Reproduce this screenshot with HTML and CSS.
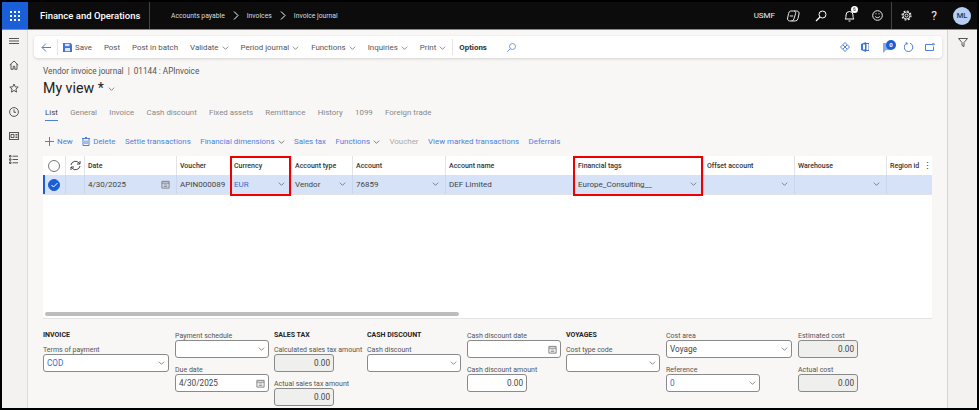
FILE: index.html
```html
<!DOCTYPE html>
<html lang="en">
<head>
    <meta charset="UTF-8">
    <meta name="viewport" content="width=device-width, initial-scale=1.0">
    <title>Invoice journal</title>
    <link rel="stylesheet" href="styles.css">
</head>
<body>
    <svg class="sprites" width="0" height="0">
        <symbol id="chev" viewBox="0 0 10 6"><path d="M1 1l4 4 4-4" fill="none" stroke="currentColor" stroke-width="1"/></symbol>
        <symbol id="cal" viewBox="0 0 10 10"><path d="M1 1.5h8v7.5h-8z" fill="none" stroke="currentColor"/><path d="M1 3.5h8" stroke="currentColor"/><path d="M3 5.5h4M3 7.2h4" stroke="currentColor" stroke-width=".8"/></symbol>
    </svg>

    <div class="app">
        <header class="topbar">
            <div class="waffle">
                <svg width="10" height="10" viewBox="0 0 10 10" fill="#fff"><rect width="2" height="2"/><rect x="4" width="2" height="2"/><rect x="8" width="2" height="2"/><rect y="4" width="2" height="2"/><rect x="4" y="4" width="2" height="2"/><rect x="8" y="4" width="2" height="2"/><rect y="8" width="2" height="2"/><rect x="4" y="8" width="2" height="2"/><rect x="8" y="8" width="2" height="2"/></svg>
            </div>
            <div class="app-name">Finance and Operations</div>
            <nav class="crumbs">
                <span>Accounts payable</span>
                <svg width="6" height="9" viewBox="0 0 6 9"><path d="M1 .5l4 4-4 4" fill="none" stroke="#fff"/></svg>
                <span>Invoices</span>
                <svg width="6" height="9" viewBox="0 0 6 9"><path d="M1 .5l4 4-4 4" fill="none" stroke="#fff"/></svg>
                <span>Invoice journal</span>
            </nav>
            <div class="top-right">
                <span class="company">USMF</span>
                <span class="top-icon">
                    <svg width="13" height="12" viewBox="0 0 13 12" fill="none" stroke="#e8e8e8"><path d="M3.500 1h3.200a2 2 0 0 1 1.900 2.600l-1.700 5.400a3 3 0 0 1-2.900 2h-1.200a2.300 2.300 0 0 1-2.200-3l1-4.500a3 3 0 0 1 1.900-2.500z"/><path d="M7 1h2.800a2.300 2.300 0 0 1 2.200 3l-1 4.500a3 3 0 0 1-2.900 2.500h-3.600"/><path d="M2.800 6h3.400"/></svg>
                </span>
                <span class="top-icon">
                    <svg width="12" height="12" viewBox="0 0 12 12" fill="none" stroke="#fff"><circle cx="7.500" cy="4.500" r="3.500"/><path d="M5 7l-4 4" stroke-width="1.300"/></svg>
                </span>
                <span class="top-icon bell">
                    <svg width="11" height="12" viewBox="0 0 11 12" fill="none" stroke="#fff"><path d="M1 9c1-1 1-2 1-4a3.500 3.500 0 0 1 7 0c0 2 0 3 1 4z"/><path d="M4.500 11h2"/></svg>
                    <span class="bell-badge">6</span>
                </span>
                <span class="top-icon">
                    <svg width="11" height="11" viewBox="0 0 11 11" fill="none" stroke="#eee"><circle cx="5.500" cy="5.500" r="4.800"/><path d="M3.200 6.500c1 1.500 3.600 1.500 4.600 0"/><path d="M3.500 3.800h1M6.500 3.800h1"/></svg>
                </span>
                <span class="top-divider"></span>
                <span class="top-icon">
                    <svg width="11" height="11" viewBox="0 0 11 11" fill="none" stroke="#eee"><circle cx="5.500" cy="5.500" r="1.500"/><circle cx="5.500" cy="5.500" r="3.500"/><circle cx="5.500" cy="5.500" r="4.500" stroke-width="1.200" stroke-dasharray="1.800 1.730"/></svg>
                </span>
                <span class="top-icon help">?</span>
                <span class="avatar">ML</span>
            </div>
        </header>

        <div class="main">
            <aside class="rail">
                <svg width="10" height="6" viewBox="0 0 10 6" stroke="#555"><path d="M0 .5h10M0 3h10M0 5.500h10"/></svg>
                <svg width="10" height="10" viewBox="0 0 10 10" fill="none" stroke="#555"><path d="M.8 5l4.200-4 4.200 4M2 4v5.300h2.200v-3h1.600v3h2.200v-5.300"/></svg>
                <svg width="10" height="10" viewBox="0 0 10 10" fill="none" stroke="#555"><path d="M5 1l1.200 2.800 3 .3-2.300 2 .7 3-2.600-1.600-2.600 1.600.7-3-2.300-2 3-.3z"/></svg>
                <svg width="10" height="10" viewBox="0 0 10 10" fill="none" stroke="#555"><circle cx="5" cy="5" r="4.400"/><path d="M5 2.500v2.800h2"/></svg>
                <svg width="10" height="8" viewBox="0 0 10 8" fill="none" stroke="#555"><rect x=".5" y=".5" width="9" height="7"/><path d="M2 2.500h3v3h-3zM6.500 2.500h2M6.500 4h2M6.500 5.500h2"/></svg>
                <svg width="9" height="9" viewBox="0 0 9 9" fill="none" stroke="#555"><path d="M.5.500h1.500v1.500h-1.500zM.5 3.800h1.500v1.500h-1.500zM.5 7h1.500v1.500h-1.500zM3.500 1.200h5.500M3.500 4.500h5.500M3.500 7.800h5.500"/></svg>
            </aside>

            <main class="content">
                <div class="action-bar">
                    <span class="back">
                        <svg width="10" height="9" viewBox="0 0 10 9" fill="none" stroke="#4d7fe0"><path d="M5 .5l-4 4 4 4M1 4.500h9"/></svg>
                    </span>
                    <span class="bar-divider"></span>
                    <span class="action save">
                        <svg width="9" height="9" viewBox="0 0 9 9"><path d="M0 0h7.500l1.500 1.500v7.500h-9z" fill="#3f74d6"/><rect x="2" y=".8" width="4.500" height="2.400" fill="#dce6f8"/><rect x="2" y="5" width="5" height="3.200" fill="#dce6f8"/></svg>
                        Save
                    </span>
                    <span class="action">Post</span>
                    <span class="action">Post in batch</span>
                    <span class="action">Validate <svg class="chev"><use href="#chev"/></svg></span>
                    <span class="action">Period journal <svg class="chev"><use href="#chev"/></svg></span>
                    <span class="action">Functions <svg class="chev"><use href="#chev"/></svg></span>
                    <span class="action">Inquiries <svg class="chev"><use href="#chev"/></svg></span>
                    <span class="action">Print <svg class="chev"><use href="#chev"/></svg></span>
                    <span class="bar-divider"></span>
                    <span class="action options">Options</span>
                    <svg class="bar-search" width="9" height="9" viewBox="0 0 9 9" fill="none" stroke="#6f98e8"><circle cx="5.500" cy="3.500" r="3"/><path d="M3.300 5.700l-3 3"/></svg>
                    <div class="bar-right">
                        <svg width="10" height="10" viewBox="0 0 10 10" fill="none" stroke="#4d7fe0"><path d="M5 .5l4.500 4.500-4.500 4.500-4.500-4.500z"/><path d="M3 3l4 4M7 3l-4 4"/></svg>
                        <svg width="8" height="10" viewBox="0 0 8 10"><path d="M0 2l5-2v10l-5-2z" fill="#3f74d6"/><path d="M5 1.500h3v7h-3z" fill="none" stroke="#3f74d6"/><rect x="2" y="2.500" width="2" height="5" fill="#fff"/></svg>
                        <span class="msg">
                            <svg width="9" height="11" viewBox="0 0 9 11"><path d="M1 1h7v7h-4l-3 3z" fill="#86a9ec"/></svg>
                            <span class="msg-badge">0</span>
                        </span>
                        <svg width="10" height="10" viewBox="0 0 10 10" fill="none" stroke="#4d7fe0"><path d="M3 1.200a4.300 4.300 0 1 0 3 0"/><path d="M1.500 .8l1.800.3-.5 1.700"/></svg>
                        <svg width="10" height="8" viewBox="0 0 10 8" fill="none" stroke="#4d7fe0"><path d="M7 1.500h-6.500v6h8v-4"/><path d="M8 0v2.500M7 1.200h3"/></svg>
                    </div>
                </div>

                <div class="page-crumb">Vendor invoice journal &nbsp;|&nbsp; 01144 : APInvoice</div>
                <h1 class="view-title">My view * <svg class="chev"><use href="#chev"/></svg></h1>

                <div class="tabs">
                    <span class="tab active">List</span>
                    <span class="tab">General</span>
                    <span class="tab">Invoice</span>
                    <span class="tab">Cash discount</span>
                    <span class="tab">Fixed assets</span>
                    <span class="tab">Remittance</span>
                    <span class="tab">History</span>
                    <span class="tab">1099</span>
                    <span class="tab">Foreign trade</span>
                </div>

                <div class="sub-actions">
                    <span class="sub"><svg width="9" height="9" viewBox="0 0 9 9" stroke="#4d7fe0"><path d="M4.500 0v9M0 4.500h9"/></svg> New</span>
                    <span class="sub"><svg width="8" height="9" viewBox="0 0 8 9" fill="none" stroke="#4d7fe0"><path d="M1 2v6.500h6v-6.500M0 1.500h8M3 .5h2M3 3.500v3.500M5 3.500v3.500"/></svg> Delete</span>
                    <span class="sub">Settle transactions</span>
                    <span class="sub">Financial dimensions <svg class="chev dark"><use href="#chev"/></svg></span>
                    <span class="sub">Sales tax</span>
                    <span class="sub">Functions <svg class="chev dark"><use href="#chev"/></svg></span>
                    <span class="sub off">Voucher</span>
                    <span class="sub">View marked transactions</span>
                    <span class="sub">Deferrals</span>
                </div>

                <section class="grid">
                    <div class="grid-row grid-head">
                        <div class="cell"><span class="radio"></span></div>
                        <div class="cell">
                            <svg width="11" height="11" viewBox="0 0 11 11" fill="none" stroke="#444"><path d="M1 5a4.500 4.500 0 0 1 8-2l1 1M10 6a4.500 4.500 0 0 1-8 2l-1-1"/><path d="M10 1v3h-3M1 10v-3h3"/></svg>
                        </div>
                        <div class="cell">Date</div>
                        <div class="cell">Voucher</div>
                        <div class="cell">Currency</div>
                        <div class="cell">Account type</div>
                        <div class="cell">Account</div>
                        <div class="cell">Account name</div>
                        <div class="cell">Financial tags</div>
                        <div class="cell">Offset account</div>
                        <div class="cell">Warehouse</div>
                        <div class="cell">Region id <span class="kebab">⋮</span></div>
                    </div>
                    <div class="grid-row grid-data">
                        <div class="cell"><span class="radio checked"><svg width="7" height="6" viewBox="0 0 7 6" fill="none" stroke="#fff"><path d="M.5 3l2 2 4-4"/></svg></span></div>
                        <div class="cell"></div>
                        <div class="cell"><span class="val">4/30/2025</span><svg class="cal"><use href="#cal"/></svg></div>
                        <div class="cell"><span class="val">APIN000089</span></div>
                        <div class="cell"><span class="val link">EUR</span><svg class="chev"><use href="#chev"/></svg></div>
                        <div class="cell"><span class="val">Vendor</span><svg class="chev"><use href="#chev"/></svg></div>
                        <div class="cell"><span class="val">76859</span><svg class="chev"><use href="#chev"/></svg></div>
                        <div class="cell"><span class="val">DEF Limited</span></div>
                        <div class="cell"><span class="val">Europe_Consulting__</span><svg class="chev"><use href="#chev"/></svg></div>
                        <div class="cell"><span class="val"></span><svg class="chev"><use href="#chev"/></svg></div>
                        <div class="cell"><span class="val"></span><svg class="chev"><use href="#chev"/></svg></div>
                        <div class="cell"></div>
                    </div>
                    <div class="h-scroll"><div class="h-thumb"></div></div>
                    <div class="mark mark-currency"></div>
                    <div class="mark mark-tags"></div>
                </section>

                <section class="details">
                    <div class="group w132 headed">
                        <h3>INVOICE</h3>
                        <label>Terms of payment</label>
                        <div class="field w126"><span class="link">COD</span><svg class="chev"><use href="#chev"/></svg></div>
                    </div>
                    <div class="group w99">
                        <label>Payment schedule</label>
                        <div class="field w94"><span></span><svg class="chev"><use href="#chev"/></svg></div>
                        <label class="next">Due date</label>
                        <div class="field w94"><span>4/30/2025</span><svg class="cal"><use href="#cal"/></svg></div>
                    </div>
                    <div class="group w93 headed">
                        <h3>SALES TAX</h3>
                        <label>Calculated sales tax amount</label>
                        <div class="field w60 num">0.00</div>
                        <label class="next">Actual sales tax amount</label>
                        <div class="field w60 num">0.00</div>
                    </div>
                    <div class="group w100 headed">
                        <h3>CASH DISCOUNT</h3>
                        <label>Cash discount</label>
                        <div class="field w94"><span></span><svg class="chev"><use href="#chev"/></svg></div>
                    </div>
                    <div class="group w99">
                        <label>Cash discount date</label>
                        <div class="field w94"><span></span><svg class="cal"><use href="#cal"/></svg></div>
                        <label class="next">Cash discount amount</label>
                        <div class="field w60 plain-num">0.00</div>
                    </div>
                    <div class="group w100 headed">
                        <h3>VOYAGES</h3>
                        <label>Cost type code</label>
                        <div class="field w94"><span></span><svg class="chev"><use href="#chev"/></svg></div>
                    </div>
                    <div class="group w132">
                        <label>Cost area</label>
                        <div class="field w126"><span>Voyage</span><svg class="chev"><use href="#chev"/></svg></div>
                        <label class="next">Reference</label>
                        <div class="field w94"><span class="link">0</span><svg class="chev"><use href="#chev"/></svg></div>
                    </div>
                    <div class="group w80">
                        <label>Estimated cost</label>
                        <div class="field w60 num">0.00</div>
                        <label class="next">Actual cost</label>
                        <div class="field w60 num">0.00</div>
                    </div>
                </section>
            </main>

            <aside class="filter-pane">
                <svg width="10" height="9" viewBox="0 0 10 9" fill="none" stroke="#555"><path d="M.5.500h9l-3.500 4v4l-2-1v-3z"/></svg>
            </aside>
        </div>
    </div>
</body>
</html>
```

FILE: styles.css
```css
body {
    font-family: Roboto, "Open Sans", sans-serif;
    font-size: 7.900px;
    margin: 0;
    padding: 0;
    background-color: #000;
    color: #444;
    overflow: hidden;
}

.sprites {
    position: absolute;
}

.app {
    width: 975px;
    height: 406px;
    margin: 2px;
    display: flex;
    flex-direction: column;
    overflow: hidden;
    background-color: #f8f7f6;
}

/* Top bar */
.topbar {
    display: flex;
    align-items: center;
    height: 27px;
    flex: none;
    background-color: #0c0c0c;
    border-bottom: 1px solid #8a8a8a;
    color: #fff;
}

.waffle {
    width: 26px;
    height: 27px;
    background-color: #1a5fd8;
    display: flex;
    align-items: center;
    justify-content: center;
}

.app-name {
    width: 122px;
    height: 27px;
    line-height: 27px;
    padding-left: 12px;
    box-sizing: border-box;
    font-size: 9.500px;
    font-weight: 500;
    border-right: 1px solid #444;
}

.crumbs {
    display: flex;
    align-items: center;
    gap: 8px;
    margin-left: 21px;
    font-size: 6.800px;
    color: #ddd;
}

.top-right {
    margin-left: auto;
    display: flex;
    align-items: center;
    height: 27px;
    padding-right: 6px;
}

.company {
    font-size: 8px;
    color: #eee;
    margin-right: 4px;
}

.top-icon {
    width: 28px;
    display: flex;
    justify-content: center;
    align-items: center;
    position: relative;
}

.help {
    font-size: 12px;
    color: #eee;
}

.bell-badge {
    position: absolute;
    top: -4px;
    left: 16px;
    width: 7px;
    height: 7px;
    line-height: 7px;
    border-radius: 50%;
    background-color: #fff;
    color: #222;
    font-size: 5px;
    text-align: center;
}

.top-divider {
    width: 1px;
    height: 27px;
    background-color: #444;
}

.avatar {
    width: 18px;
    height: 18px;
    line-height: 18px;
    margin-left: 5px;
    border-radius: 50%;
    background-color: #b6cdf4;
    color: #333;
    font-size: 7.500px;
    font-weight: 500;
    text-align: center;
}

/* Side panes */
.main {
    display: flex;
    flex: 1;
    min-height: 0;
}

.rail {
    width: 26px;
    flex: none;
    display: grid;
    grid-auto-rows: 23.800px;
    align-content: start;
    justify-items: center;
    align-items: center;
    padding-right: 2px;
    box-sizing: border-box;
    background-color: #f3f2f1;
    border-right: 1px solid #dcdcdc;
}

.rail svg {
    margin-bottom: 2px;
}

.filter-pane {
    width: 30px;
    flex: none;
    box-sizing: border-box;
    padding-top: 8px;
    display: flex;
    justify-content: center;
    align-items: flex-start;
    background-color: #f3f2f1;
    border-left: 1px solid #d4d4d4;
}

.content {
    flex: 1;
    min-width: 0;
    padding: 6px 5px 0 6px;
}

/* Action bar */
.action-bar {
    display: flex;
    align-items: center;
    height: 22px;
    background-color: #fff;
    border-radius: 4px;
    box-shadow: 0 1px 3px rgba(0, 0, 0, 0.15);
    color: #555;
}

.back {
    width: 23px;
    display: flex;
    justify-content: center;
}

.bar-divider {
    width: 1px;
    height: 16px;
    background-color: #e4e4e4;
}

.action {
    display: flex;
    align-items: center;
    gap: 3px;
    padding: 1px 6px 0;
    white-space: nowrap;
}

.action.save {
    padding-left: 5px;
}

.options {
    font-weight: 700;
    color: #333;
}

.bar-search {
    margin-left: 14px;
}

.bar-right {
    margin-left: auto;
    display: flex;
    align-items: center;
    gap: 11px;
    padding-right: 7px;
}

.msg {
    position: relative;
    display: flex;
    margin: 0 2px;
}

.msg-badge {
    position: absolute;
    top: -2px;
    left: 4px;
    width: 10px;
    height: 10px;
    line-height: 10px;
    border-radius: 50%;
    background-color: #1a5fd8;
    color: #fff;
    font-size: 6px;
    font-weight: 700;
    text-align: center;
}

.chev {
    width: 7px;
    height: 4px;
    flex: none;
    color: #555;
}

.chev.dark {
    color: #444;
}

.cal {
    width: 9px;
    height: 9px;
    flex: none;
    color: #777;
}

.link {
    color: #3a6cd4;
}

/* Page header */
.page-crumb {
    margin: 7px 0 0 9px;
    line-height: 12px;
    font-size: 8.200px;
    color: #555;
}

.view-title {
    margin: 2px 0 0 9px;
    line-height: 18px;
    font-size: 14.200px;
    font-weight: 400;
    color: #222;
}

.view-title .chev {
    vertical-align: middle;
    margin-left: 1px;
}

.tabs {
    display: flex;
    gap: 12.300px;
    margin: 10px 0 0 11px;
    height: 14px;
    line-height: 12px;
    color: #888;
}

.tab.active {
    color: #444;
    border-bottom: 1px solid #4d7fe0;
}

.sub-actions {
    display: flex;
    align-items: center;
    gap: 9.500px;
    margin: 13px 0 0 11px;
    height: 15px;
    color: #4d7fe0;
}

.sub {
    display: flex;
    align-items: center;
    gap: 3px;
    white-space: nowrap;
}

.sub.off {
    color: #aaa;
}

/* Grid */
.grid {
    position: relative;
    margin: 7px 0 0 9px;
    width: 889px;
    height: 163px;
    box-sizing: border-box;
    background-color: #fff;
    border-bottom: 1px solid #e4e4e4;
}

.grid-row {
    display: grid;
    grid-template-columns: 22px 19px 92px 54px 61px 61px 93px 129px 129px 91px 92px 46px;
}

.grid-head {
    height: 19px;
    font-size: 7px;
    font-weight: 500;
    color: #333;
}

.grid-head .cell {
    padding-top: 1px;
}

.grid-data {
    height: 19px;
    background-color: #d6e2f8;
    border-bottom: 1px solid #e4e4e4;
    box-shadow: inset 2px 0 0 #1a5fd8;
}

.cell {
    display: flex;
    align-items: center;
    padding: 0 3px;
    min-width: 0;
    white-space: nowrap;
    border-left: 1px solid #e4e4e4;
}

.grid-row .cell:first-child {
    border-left: 0;
    padding: 0;
    justify-content: center;
}

.grid-row .cell:nth-child(2) {
    padding: 0;
    justify-content: center;
}

.grid-data .cell {
    padding: 0 6px 1px 3px;
    font-size: 8px;
    border-left-color: #c9d6ec;
}

.val {
    flex: 1;
}

.kebab {
    margin-left: 4px;
    font-size: 9px;
}

.radio {
    width: 10px;
    height: 10px;
    border: 1px solid #777;
    border-radius: 50%;
    display: block;
}

.radio.checked {
    border-color: #1a5fd8;
    background-color: #1a5fd8;
    display: flex;
    align-items: center;
    justify-content: center;
}

.h-scroll {
    position: absolute;
    left: 2px;
    right: 0;
    bottom: 2px;
}

.h-thumb {
    width: 414px;
    height: 4px;
    border-radius: 2px;
    background-color: #bdbdbd;
}

.mark {
    position: absolute;
    top: 0;
    height: 40px;
    box-sizing: border-box;
    border: 2px solid #ee0000;
}

.mark-currency {
    left: 187px;
    width: 61px;
}

.mark-tags {
    left: 530px;
    width: 130px;
}

/* Details panel */
.details {
    display: flex;
    margin: 11px 0 0 9px;
}

.group {
    flex: none;
}

.group h3 {
    margin: 0 0 4px;
    height: 10px;
    line-height: 10px;
    font-size: 7px;
    font-weight: 700;
    color: #222;
}

.group label {
    display: block;
    height: 10px;
    line-height: 12px;
    font-size: 7px;
    white-space: nowrap;
    color: #555;
}

.group label.next {
    margin-top: 6px;
}

.field {
    display: flex;
    align-items: center;
    justify-content: space-between;
    height: 18px;
    box-sizing: border-box;
    padding: 0 3px;
    background-color: #fff;
    border: 1px solid #8a8a8a;
    border-radius: 3px;
    font-size: 8.200px;
}

.field.num {
    justify-content: flex-end;
    background-color: #efefee;
}

.field.plain-num {
    justify-content: flex-end;
}

.w60 { width: 60px; }
.w80 { width: 80px; }
.w93 { width: 93px; }
.w94 { width: 94px; }
.w99 { width: 99px; }
.w100 { width: 100px; }
.w126 { width: 126px; }
.w132 { width: 132px; }
```
